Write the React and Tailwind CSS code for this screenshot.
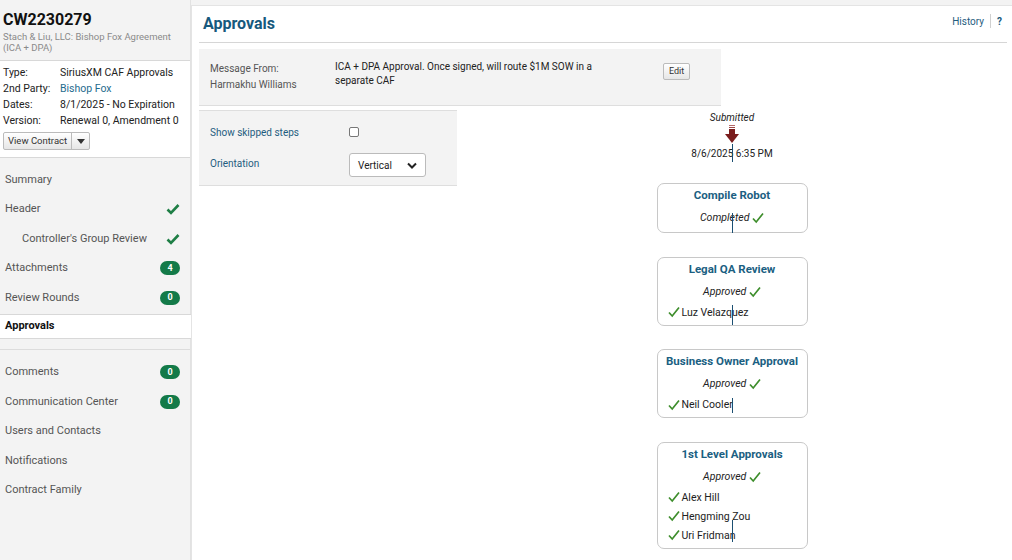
import React from "react"

const Badge = ({ n }) => (
  <span className="inline-flex items-center justify-center w-[20px] h-[14px] rounded-full bg-[#137a48] text-white text-[9px] font-bold">
    {n}
  </span>
)

const Tick = () => (
  <svg width="14" height="12" viewBox="0 0 14 12">
    <path d="M1.5 6.5 L5 10 L12.5 2" fill="none" stroke="#1e7e45" strokeWidth="2.6" />
  </svg>
)

const SmallTick = () => (
  <svg width="12" height="12" viewBox="0 0 12 12" className="inline-block">
    <path d="M1 6.5 L4.2 10 L11 1.5" fill="none" stroke="#3e8e2c" strokeWidth="1.7" />
  </svg>
)

const NavItem = ({ label, right, indent }) => (
  <div className={`flex items-center justify-between h-[29.5px] pr-[10px] text-[11px] text-[#555] ${indent ? "pl-[22px]" : "pl-[5px]"}`}>
    <span>{label}</span>
    {right}
  </div>
)

const Sidebar = () => (
  <div className="w-[191px] shrink-0 bg-[#f3f3f3] border-r border-[#e2e2e2] min-h-[560px]">
    <div className="px-[3px] pt-[10px] h-[60px]">
      <div className="text-[16px] font-bold text-[#111] leading-[20px]">CW2230279</div>
      <div className="text-[9.5px] text-[#8a8a8a] leading-[11px] mt-[1px]">
        Stach &amp; Liu, LLC: Bishop Fox Agreement
        <br />
        (ICA + DPA)
      </div>
    </div>
    <div className="bg-white border-y border-[#d8d8d8] h-[98px] px-[3px] pt-[4px] text-[10.5px] text-[#222]">
      {[
        ["Type:", "SiriusXM CAF Approvals"],
        ["2nd Party:", "Bishop Fox"],
        ["Dates:", "8/1/2025 - No Expiration"],
        ["Version:", "Renewal 0, Amendment 0"],
      ].map(([k, v]) => (
        <div key={k} className="flex h-[16px] items-center">
          <span className="w-[57px]">{k}</span>
          <span className={k === "2nd Party:" ? "text-[#1f6b8e]" : ""}>{v}</span>
        </div>
      ))}
      <div className="mt-[3px] inline-flex h-[18px] border border-[#bbb] rounded-[2px] bg-gradient-to-b from-white to-[#e6e6e6] text-[9.5px] text-[#333]">
        <span className="px-[4px] flex items-center border-r border-[#bbb]">View Contract</span>
        <span className="w-[17px] flex items-center justify-center">
          <svg width="8" height="5" viewBox="0 0 8 5">
            <path d="M0 0 H8 L4 5 Z" fill="#333" />
          </svg>
        </span>
      </div>
    </div>
    <div className="pt-[7px]">
      <NavItem label="Summary" />
      <NavItem label="Header" right={<Tick />} />
      <NavItem label="Controller's Group Review" indent right={<Tick />} />
      <NavItem label="Attachments" right={<Badge n="4" />} />
      <NavItem label="Review Rounds" right={<Badge n="0" />} />
    </div>
    <div className="mt-[1px] bg-white border-y border-[#d8d8d8] h-[25px] flex items-center pl-[5px] pt-[1px] text-[11px] font-bold text-[#111] -mr-px">
      Approvals
    </div>
    <div className="h-[11px] border-b border-[#dcdcdc]"></div>
    <div className="pt-[8px]">
      <NavItem label="Comments" right={<Badge n="0" />} />
      <NavItem label="Communication Center" right={<Badge n="0" />} />
      <NavItem label="Users and Contacts" />
      <NavItem label="Notifications" />
      <NavItem label="Contract Family" />
    </div>
  </div>
)

const Cursor = ({ className }) => (
  <span className={`absolute left-1/2 w-px bg-[#1b4f72] ${className}`}></span>
)

const Step = ({ title, status, people = [], cursor }) => (
  <div className={`relative w-[151px] border border-[#c8c8c8] rounded-[7px] bg-white px-[10px] pt-[4px] ${people.length ? "pb-[3px]" : "pb-[7px]"}`}>
    <div className="text-center text-[11.5px] font-bold text-[#1b5f82] leading-[15px] whitespace-nowrap -mx-[8px]">{title}</div>
    <div className="text-center text-[10.5px] italic text-[#222] leading-[14px] mt-[8px]">
      {status} <SmallTick />
    </div>
    {people.length > 0 && (
      <div className="mt-[4px]">
        {people.map((p) => (
          <div key={p} className="flex items-center gap-[2px] text-[10.5px] text-[#222] leading-[19px]">
            <SmallTick />
            <span>{p}</span>
          </div>
        ))}
      </div>
    )}
    {cursor}
  </div>
)

const Flow = () => (
  <div className="flex-1 flex flex-col items-center pt-[1px]">
    <div className="text-[10px] italic text-[#222] leading-[13px]">Submitted</div>
    <svg width="14" height="19" viewBox="0 0 14 19" className="mt-[1px]">
      <rect x="4" y="0" width="6" height="1" fill="#b46a6a" />
      <rect x="4" y="2" width="6" height="1" fill="#a04848" />
      <rect x="4" y="4" width="6" height="6" fill="#7a1c1c" />
      <path d="M0 9 H14 L7 18 Z" fill="#7a1c1c" />
    </svg>
    <div className="relative text-[10px] text-[#222] leading-[13px] mt-[3px]">
      8/6/2025 6:35 PM
      <Cursor className="-top-[3px] h-[18px]" />
    </div>
    <div className="mt-[23px] flex flex-col gap-[23.5px]">
      <Step title="Compile Robot" status="Completed" cursor={<Cursor className="top-[29px] h-[20px]" />} />
      <Step title="Legal QA Review" status="Approved" people={["Luz Velazquez"]} cursor={<Cursor className="top-[47px] h-[20px]" />} />
      <Step title="Business Owner Approval" status="Approved" people={["Neil Cooler"]} cursor={<Cursor className="top-[48px] h-[15px]" />} />
      <Step
        title="1st Level Approvals"
        status="Approved"
        people={["Alex Hill", "Hengming Zou", "Uri Fridman"]}
        cursor={<Cursor className="top-[77px] h-[22px]" />}
      />
    </div>
  </div>
)

export default function App() {
  return (
    <div className="flex w-[1012px] h-[560px] overflow-hidden bg-[#f3f3f3] font-['Roboto',sans-serif]">
      <Sidebar />
      <div className="flex-1 mt-[5px] bg-white border-l border-t border-[#e4e4e4] pl-[7px] pr-[5px]">
        <div className="flex items-center justify-between h-[37px] border-b border-[#d6d6d6] pl-[4px] pr-[5px]">
          <div className="text-[16px] font-bold text-[#17597d]">Approvals</div>
          <div className="flex items-center text-[10px] text-[#1f5d80] -mt-[6px]">
            <span>History</span>
            <span className="mx-[6px] w-px h-[14px] bg-[#d0d0d0]"></span>
            <span className="font-bold text-[#17597d]">?</span>
          </div>
        </div>
        <div className="mt-[6px] w-[522px] h-[57px] bg-[#f3f3f3] border-b border-[#dedede] flex text-[10px] text-[#222]">
          <div className="w-[136px] pl-[11px] pt-[12px] text-[#555] leading-[16px]">
            Message From:
            <br />
            Harmakhu Williams
          </div>
          <div className="w-[328px] pt-[11px] leading-[13.5px]">
            <div className="w-[290px]">ICA + DPA Approval. Once signed, will route $1M SOW in a separate CAF</div>
          </div>
          <div className="pt-[14px]">
            <button className="h-[17px] px-[5px] border border-[#bbb] rounded-[2px] bg-gradient-to-b from-white to-[#e6e6e6] text-[9px] text-[#333]">
              Edit
            </button>
          </div>
        </div>
        <div className="flex mt-[4px]">
          <div className="w-[258px] h-[76px] bg-[#f3f3f3] border-y border-[#dedede] pl-[11px] pt-[14px] text-[10px] text-[#1f5d80]">
            <div className="flex items-center h-[14px]">
              <span className="w-[139px]">Show skipped steps</span>
              <span className="w-[10px] h-[10px] border border-[#777] rounded-[2px] bg-white"></span>
            </div>
            <div className="flex items-center mt-[14px]">
              <span className="w-[139px] -mt-[4px]">Orientation</span>
              <div className="w-[77px] h-[24px] border border-[#bbb] rounded-[3px] bg-white flex items-center justify-between px-[8px] text-[#222] text-[10px]">
                <span>Vertical</span>
                <svg width="10" height="7" viewBox="0 0 10 7">
                  <path d="M1 1.5 L5 5.5 L9 1.5" fill="none" stroke="#222" strokeWidth="2" />
                </svg>
              </div>
            </div>
          </div>
          <Flow />
        </div>
      </div>
    </div>
  )
}
